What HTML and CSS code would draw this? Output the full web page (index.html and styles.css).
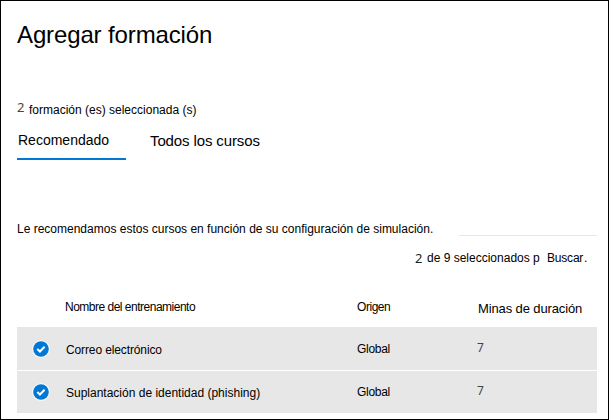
FILE: index.html
```html
<!DOCTYPE html>
<html lang="es">
<head>
<meta charset="utf-8">
<title>Agregar formación</title>
<link rel="stylesheet" href="styles.css">
</head>
<body>
<main class="panel">
  <h1 class="title"><span>Agregar formación</span></h1>
  <div class="count"><span class="num">2</span><span class="count-label">formación (es) seleccionada (s)</span></div>
  <nav class="tabs">
    <a class="tab active"><span>Recomendado</span></a>
    <a class="tab all"><span>Todos los cursos</span></a>
  </nav>
  <div class="intro"><p class="hint"><span>Le recomendamos estos cursos en función de su configuración de simulación.</span></p><div class="rule"></div></div>
  <div class="toolbar"><span class="sel-num">2</span><span class="sel">de 9 seleccionados p</span><span class="search">Buscar</span><span class="dot">.</span></div>
  <div class="grid head"><span></span><span class="h-name"><span>Nombre del entrenamiento</span></span><span class="h-origin"><span>Origen</span></span><span class="h-time"><span>Minas de duración</span></span></div>
  <div class="grid row">
    <svg class="check" viewBox="0 0 18 18"><circle cx="9" cy="9" r="8.7" fill="#fff"/><circle cx="9" cy="9" r="7.8" fill="#0078d4"/><path d="M5.3 9.1 7.9 11.5 12.6 6.8" fill="none" stroke="#fff" stroke-width="2"/></svg>
    <span class="name"><span class="n1">Correo electrónico</span></span><span class="origin"><span>Global</span></span><span class="time">7</span>
  </div>
  <div class="grid row last">
    <svg class="check" viewBox="0 0 18 18"><circle cx="9" cy="9" r="8.7" fill="#fff"/><circle cx="9" cy="9" r="7.8" fill="#0078d4"/><path d="M5.3 9.1 7.9 11.5 12.6 6.8" fill="none" stroke="#fff" stroke-width="2"/></svg>
    <span class="name"><span class="n2">Suplantación de identidad (phishing)</span></span><span class="origin"><span>Global</span></span><span class="time">7</span>
  </div>
</main>
</body>
</html>
```
FILE: styles.css
```css
* { box-sizing: border-box; }
body { margin: 0; background: #fff; color: #000; font-family: "Liberation Sans", Arial, sans-serif; font-size: 12px; white-space: nowrap; }
.panel { width: 609px; height: 420px; border: 1px solid #000; padding: 19px 11px 0 16px; }
.title { margin: 0; height: 80px; font-size: 24px; font-weight: 400; line-height: 30px; letter-spacing: -0.13px; }
.count { display: flex; height: 20px; line-height: 20px; }
.num { width: 12px; font-family: "Noto Sans", sans-serif; font-size: 13px; line-height: 15px; color: #444; }
.count-label { letter-spacing: 0; }
.tabs { display: flex; height: 40px; }
.tab { height: 40px; font-size: 14px; line-height: 41px; }
.active { width: 109px; padding-left: 1px; border-bottom: 2px solid #0078d4; }
.all { margin-left: 24px; font-size: 15px; letter-spacing: -0.12px; }
.intro { display: flex; justify-content: space-between; height: 28px; margin-top: 59px; }
.hint { margin: 0; line-height: 20px; }
.rule { width: 138px; height: 17px; border-bottom: 1px solid #e6e6e6; }
.toolbar { display: flex; height: 46px; padding-left: 398px; line-height: 22px; }
.sel-num { width: 12px; font-family: "Noto Sans", sans-serif; font-size: 13px; color: #222; }
.sel { width: 120px; }
.search { width: 37px; letter-spacing: -0.2px; }
.grid { display: grid; grid-template-columns: 49px 291px 120px 120px; }
.head { height: 34px; line-height: 29px; }
.h-name { margin-left: -1px; letter-spacing: -0.5px; }
.h-origin { letter-spacing: -0.45px; }
.h-time { padding-left: 1px; font-size: 13px; line-height: 31px; letter-spacing: -0.12px; }
.row { height: 44px; border-bottom: 1px solid #fff; background: #e7e7e7; line-height: 44px; }
.check { width: 18px; height: 18px; margin: 13px 0 0 15px; }
.name { line-height: 46px; }
.n1 { letter-spacing: -0.12px; }
.origin { letter-spacing: -0.3px; }
.time { font-family: "Noto Sans", sans-serif; line-height: 42px; color: #444; }
.row.last { height: 42px; border-bottom: 0; line-height: 42px; }
.last .check { margin-top: 12px; }
.last .name { line-height: 44px; }
.last .time { line-height: 40px; }
```
